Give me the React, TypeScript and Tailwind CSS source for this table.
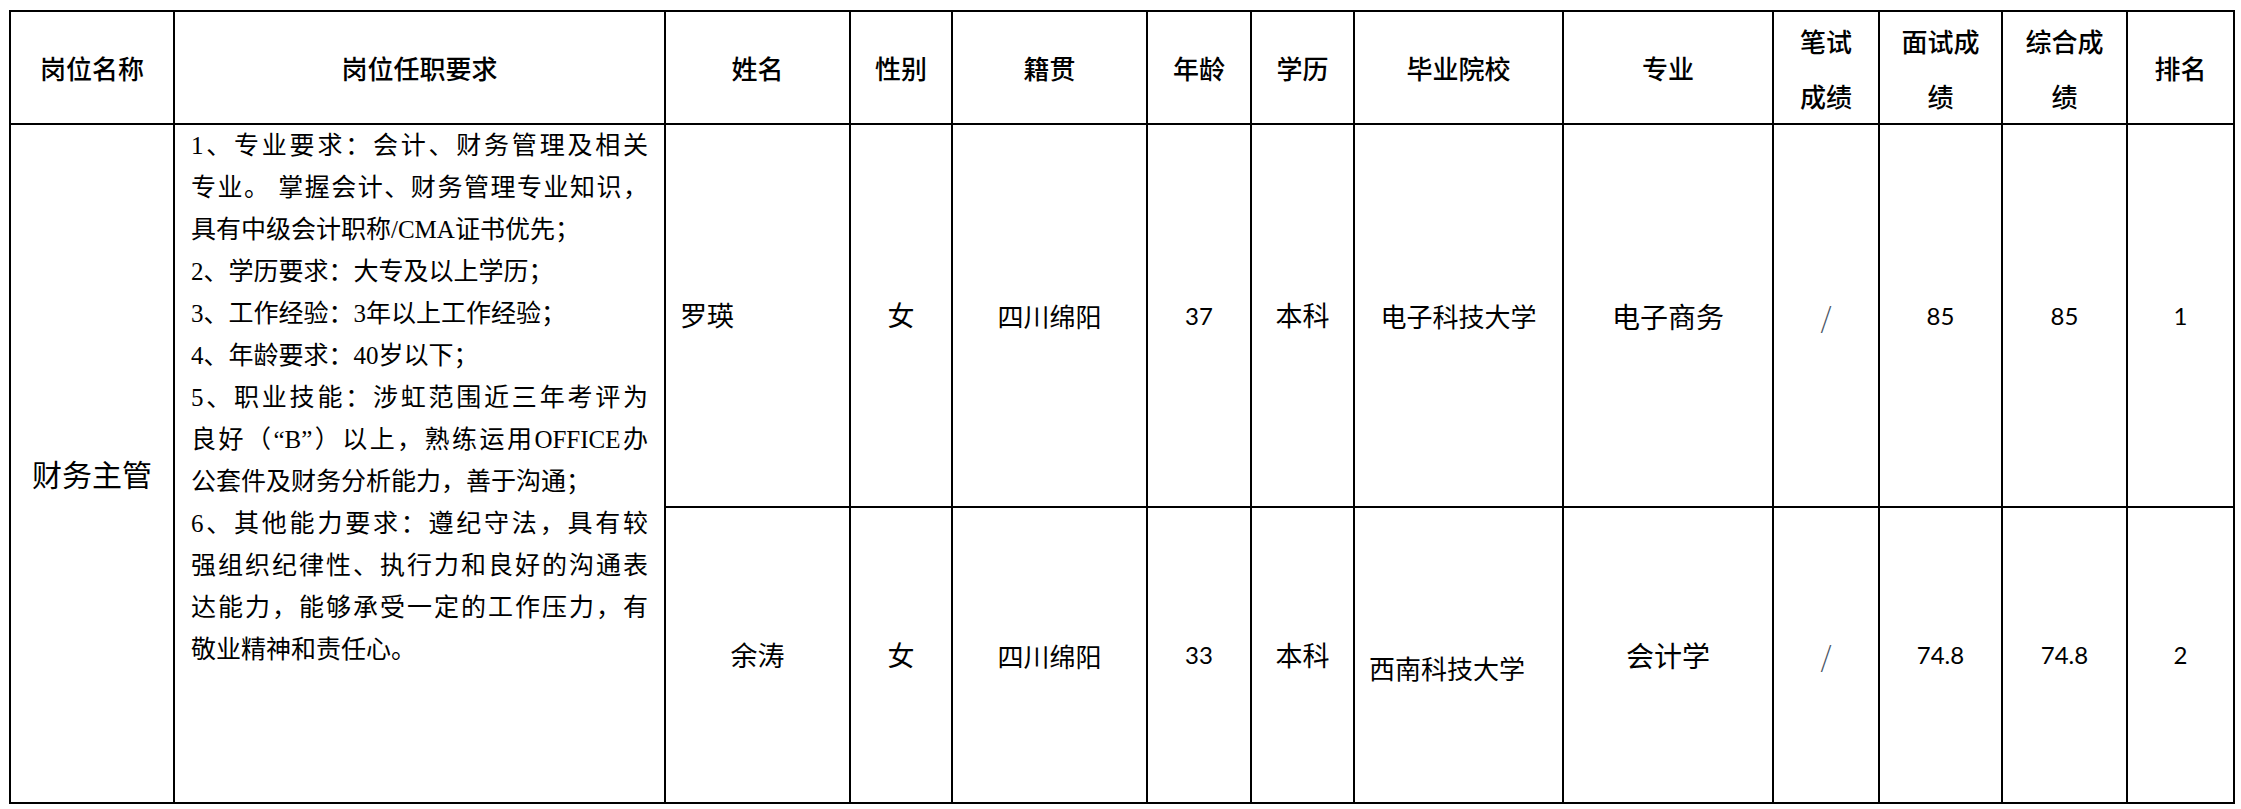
import React from 'react'

const CJK = "font-['Noto_Sans_CJK_SC',sans-serif]"
const BODY = "font-['Liberation_Serif','Noto_Sans_CJK_SC',serif]"
const NUM = "font-['Lato',sans-serif]"

const COLS = [164, 491, 185, 102, 195, 104, 103, 209, 210, 106, 123, 125, 107]
const COL_CLASSES = [
  'w-[164px]',
  'w-[491px]',
  'w-[185px]',
  'w-[102px]',
  'w-[195px]',
  'w-[104px]',
  'w-[103px]',
  'w-[209px]',
  'w-[210px]',
  'w-[106px]',
  'w-[123px]',
  'w-[125px]',
  'w-[107px]',
]

const HEADERS: React.ReactNode[] = [
  '岗位名称',
  '岗位任职要求',
  '姓名',
  '性别',
  '籍贯',
  '年龄',
  '学历',
  '毕业院校',
  '专业',
  <>笔试<br />成绩</>,
  <>面试成<br />绩</>,
  <>综合成<br />绩</>,
  '排名',
]

// each entry is one printed line; "full" lines are stretched edge to edge
const REQUIREMENTS: { text: string; full?: boolean }[] = [
  { text: '1、专业要求：会计、财务管理及相关', full: true },
  { text: '专业。 掌握会计、财务管理专业知识，', full: true },
  { text: '具有中级会计职称/CMA证书优先；' },
  { text: '2、学历要求：大专及以上学历；' },
  { text: '3、工作经验：3年以上工作经验；' },
  { text: '4、年龄要求：40岁以下；' },
  { text: '5、职业技能：涉虹范围近三年考评为', full: true },
  { text: '良好（“B”）以上，熟练运用OFFICE办', full: true },
  { text: '公套件及财务分析能力，善于沟通；' },
  { text: '6、其他能力要求：遵纪守法，具有较', full: true },
  { text: '强组织纪律性、执行力和良好的沟通表', full: true },
  { text: '达能力，能够承受一定的工作压力，有', full: true },
  { text: '敬业精神和责任心。' },
]

const cell = 'border-2 border-black p-0 align-middle text-center text-black'

export default function App() {
  return (
    <div className="min-h-[809px] w-[2241px] bg-white">
      <table className="ml-[9px] mt-[10px] table-fixed border-collapse w-[2226px]">
        <colgroup>
          {COLS.map((_, i) => (
            <col key={i} className={COL_CLASSES[i]} />
          ))}
        </colgroup>
        <thead>
          <tr className="h-[113px]">
            {HEADERS.map((h, i) => (
              <th
                key={i}
                className={`${cell} ${CJK} text-[26px] font-medium leading-[55px]`}
              >
                {h}
              </th>
            ))}
          </tr>
        </thead>
        <tbody>
          <tr className="h-[383px]">
            <td rowSpan={2} className={`${cell} ${CJK} pt-[20px] text-[30px]`}>
              财务主管
            </td>
            <td rowSpan={2} className={`${cell} ${BODY} px-[16px] align-top text-left text-[25px] leading-[42px]`}>
              {REQUIREMENTS.map((line, i) => (
                <div
                  key={i}
                  className={`h-[42px] whitespace-pre ${line.full ? 'text-justify [text-align-last:justify]' : ''}`}
                >
                  {line.text}
                </div>
              ))}
            </td>
            <td className={`${cell} ${CJK} pl-[14px] text-left text-[27px]`}>罗瑛</td>
            <td className={`${cell} ${CJK} text-[27px]`}>女</td>
            <td className={`${cell} ${CJK} text-[26px]`}>四川绵阳</td>
            <td className={`${cell} ${NUM} text-[24px]`}>37</td>
            <td className={`${cell} ${CJK} text-[27px]`}>本科</td>
            <td className={`${cell} ${CJK} text-[26px]`}>电子科技大学</td>
            <td className={`${cell} ${CJK} text-[28px]`}>电子商务</td>
            <td className={`${cell} ${CJK} text-[28px] font-light text-gray-600`}>/</td>
            <td className={`${cell} ${NUM} text-[24px]`}>85</td>
            <td className={`${cell} ${NUM} text-[24px]`}>85</td>
            <td className={`${cell} ${NUM} text-[24px]`}>1</td>
          </tr>
          <tr className="h-[296px]">
            <td className={`${cell} ${CJK} text-[27px]`}>余涛</td>
            <td className={`${cell} ${CJK} text-[27px]`}>女</td>
            <td className={`${cell} ${CJK} text-[26px]`}>四川绵阳</td>
            <td className={`${cell} ${NUM} text-[24px]`}>33</td>
            <td className={`${cell} ${CJK} text-[27px]`}>本科</td>
            <td className={`${cell} ${CJK} pl-[14px] pt-[24px] text-left text-[26px]`}>西南科技大学</td>
            <td className={`${cell} ${CJK} text-[28px]`}>会计学</td>
            <td className={`${cell} ${CJK} text-[28px] font-light text-gray-600`}>/</td>
            <td className={`${cell} ${NUM} text-[24px]`}>74.8</td>
            <td className={`${cell} ${NUM} text-[24px]`}>74.8</td>
            <td className={`${cell} ${NUM} text-[24px]`}>2</td>
          </tr>
        </tbody>
      </table>
    </div>
  )
}
